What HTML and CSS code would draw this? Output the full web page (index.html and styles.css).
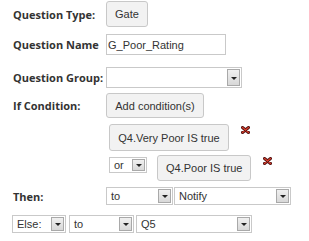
FILE: index.html
```html
<!DOCTYPE html>
<html lang="en">
<head>
    <meta charset="UTF-8">
    <title>Question</title>
    <link rel="stylesheet" href="styles.css">
</head>
<body>
    <div class="form">
        <div class="row row-type">
            <div class="label">Question Type:</div>
            <button class="btn btn-gate">Gate</button>
        </div>

        <div class="row row-name">
            <div class="label">Question Name</div>
            <input class="text" type="text" value="G_Poor_Rating">
        </div>

        <div class="row row-group">
            <div class="label">Question Group:</div>
            <span class="select sel-group"><span class="val"></span><span class="arrow"></span></span>
        </div>

        <div class="row row-if">
            <div class="label">If Condition:</div>
            <button class="btn btn-add">Add condition(s)</button>
        </div>

        <div class="row cond cond-1">
            <button class="btn btn-cond">Q4.Very Poor IS true</button>
            <svg class="del" width="9" height="8" viewBox="0 0 9 8">
                <path d="M1.5 1.5 L7.5 6.5 M7.5 1.5 L1.5 6.5" stroke="#4a1010" stroke-width="3" stroke-linecap="round"/>
                <path d="M1.5 1.5 L7.5 6.5 M7.5 1.5 L1.5 6.5" stroke="#d23b2a" stroke-width="1.4" stroke-linecap="round"/>
            </svg>
        </div>

        <div class="row cond cond-2">
            <span class="select sel-or"><span class="val">or</span><span class="arrow"></span></span>
            <button class="btn btn-cond2">Q4.Poor IS true</button>
            <svg class="del" width="9" height="8" viewBox="0 0 9 8">
                <path d="M1.5 1.5 L7.5 6.5 M7.5 1.5 L1.5 6.5" stroke="#4a1010" stroke-width="3" stroke-linecap="round"/>
                <path d="M1.5 1.5 L7.5 6.5 M7.5 1.5 L1.5 6.5" stroke="#d23b2a" stroke-width="1.4" stroke-linecap="round"/>
            </svg>
        </div>

        <div class="row row-then">
            <div class="label">Then:</div>
            <span class="select sel-to"><span class="val">to</span><span class="arrow"></span></span>
            <span class="select sel-notify"><span class="val">Notify</span><span class="arrow"></span></span>
        </div>

        <div class="row row-else">
            <span class="select sel-else"><span class="val">Else:</span><span class="arrow"></span></span>
            <span class="select sel-to2"><span class="val">to</span><span class="arrow"></span></span>
            <span class="select sel-q5"><span class="val">Q5</span><span class="arrow"></span></span>
        </div>
    </div>
</body>
</html>
```

FILE: styles.css
```css
body {
    margin: 0;
    background: #fff;
    color: #333;
    font-family: "Liberation Sans", Arial, sans-serif;
    font-size: 11px;
}

.form {
    padding: 1px 0 0 13px;
}

.row {
    display: flex;
    align-items: center;
}

.label {
    width: 93px;
    flex: none;
    font-family: "Open Sans", sans-serif;
    font-weight: 700;
    font-size: 11px;
    color: #333;
}

.btn {
    box-sizing: border-box;
    font-family: "Liberation Sans", Arial, sans-serif;
    font-size: 11px;
    color: #333;
    background: #f2f2f2;
    border: 1px solid #c8c8c8;
    border-radius: 3px;
    padding: 0 8px;
    margin: 0;
    white-space: nowrap;
}

.btn-gate { height: 26px; width: 42px; }
.btn-add { height: 25px; width: 98px; }
.btn-cond { height: 27px; width: 120px; }
.btn-cond2 { height: 26px; margin-left: 10px; }

.text {
    box-sizing: border-box;
    width: 120px;
    height: 21px;
    border: 1px solid #c9c9c9;
    padding: 0 1px;
    margin: 0;
    font-family: "Liberation Sans", Arial, sans-serif;
    font-size: 11px;
    color: #333;
}

/* select look-alike */
.select {
    box-sizing: border-box;
    display: flex;
    align-items: stretch;
    border: 1px solid #c9c9c9;
    background: #fff;
    padding: 1px;
}

.select .val {
    flex: 1;
    padding-left: 3px;
    display: flex;
    align-items: center;
    color: #333;
}

.select .arrow {
    width: 13px;
    flex: none;
    box-sizing: border-box;
    border: 1px solid #a9a9a9;
    background: linear-gradient(#f0f0f0, #d8d8d8);
    position: relative;
}

.select .arrow::after {
    content: "";
    position: absolute;
    left: 3px;
    top: 50%;
    margin-top: -1px;
    border-left: 3px solid transparent;
    border-right: 3px solid transparent;
    border-top: 3px solid #222;
}

.sel-group { width: 136px; height: 21px; }
.sel-or { width: 38px; height: 16px; }
.sel-to { width: 67px; height: 18px; }
.sel-notify { width: 117px; height: 18px; margin-left: 1px; }
.sel-else { width: 54px; height: 18px; }
.sel-to2 { width: 65px; height: 18px; margin-left: 3px; }
.sel-q5 { width: 116px; height: 18px; margin-left: 2px; }

.row-name { margin-top: 7px; }
.row-group { margin-top: 12px; }
.row-if { margin-top: 5px; }

.cond { margin-left: 96px; }
.cond-1 { margin-top: 6px; align-items: flex-start; }
.cond-2 { margin-top: 4px; align-items: flex-start; }
.cond-2 .sel-or { margin-top: 2px; }

.del {
    margin-left: 12px;
    margin-top: 2px;
}

.row-then { margin-top: 6px; }
.row-else { margin-top: 10px; margin-left: -1px; }
```
